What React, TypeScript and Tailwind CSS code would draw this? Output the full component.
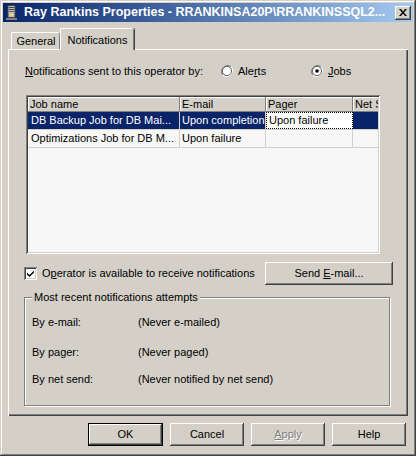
import React from 'react'

const raised =
  'shadow-[inset_-1px_-1px_#404040,inset_1px_1px_#ffffff,inset_-2px_-2px_#808080,inset_2px_2px_#d4d0c8]'
const sunken =
  'shadow-[inset_1px_1px_#808080,inset_-1px_-1px_#ffffff,inset_2px_2px_#404040,inset_-2px_-2px_#d4d0c8]'

function Radio({ checked }: { checked?: boolean }) {
  return (
    <svg width="12" height="12" viewBox="0 0 12 12">
      <path d="M10.2 1.8A6 6 0 0 0 1.8 10.2" fill="none" stroke="#808080" strokeWidth="1" />
      <path d="M1.8 10.2A6 6 0 0 0 10.2 1.8" fill="none" stroke="#ffffff" strokeWidth="1" />
      <circle cx="6" cy="6" r="4.6" fill="#ffffff" stroke="#404040" strokeWidth="0.8" />
      {checked && <circle cx="6" cy="6" r="1.8" fill="#000" />}
    </svg>
  )
}

function Btn({ children, w, isDefault, disabled }: { children: React.ReactNode; w: string; isDefault?: boolean; disabled?: boolean }) {
  return (
    <div className={`${w} h-[23px] ${isDefault ? 'border border-black' : ''}`}>
      <div
        className={`w-full h-full flex items-center justify-center bg-[#d4d0c8] ${raised} ${
          disabled ? 'text-[#808080] [text-shadow:1px_1px_#ffffff]' : 'text-black'
        }`}
      >
        {children}
      </div>
    </div>
  )
}

export default function App() {
  return (
    <div className="w-[416px] h-[456px] bg-[#d4d0c8] p-[3px] flex flex-col font-['Liberation_Sans',Arial,sans-serif] text-[11px] text-black shadow-[inset_-1px_-1px_#404040,inset_1px_1px_#d4d0c8,inset_-2px_-2px_#808080,inset_2px_2px_#ffffff]">
      {/* title bar */}
      <div className="h-[19px] flex items-center bg-gradient-to-r from-[#0a246a] to-[#a6caf0] pl-[2px] pr-[2px]">
        <svg width="14" height="16" viewBox="0 0 14 16" className="shrink-0">
          <rect x="3" y="0.5" width="7" height="12" fill="#c0c0c0" stroke="#404040" />
          <rect x="4" y="2" width="5" height="1" fill="#404040" />
          <rect x="4" y="4" width="5" height="1" fill="#404040" />
          <rect x="4" y="6" width="5" height="1" fill="#606060" />
          <rect x="5" y="9" width="3" height="2" fill="#e0e060" />
          <rect x="1" y="13" width="11" height="2" fill="#808080" />
        </svg>
        <div className="ml-[5px] text-white font-bold text-[12.5px] leading-none whitespace-nowrap">
          Ray Rankins Properties - RRANKINSA20P\RRANKINSSQL2...
        </div>
        <div className={`ml-auto w-[16px] h-[14px] bg-[#d4d0c8] flex items-center justify-center ${raised}`}>
          <svg width="8" height="7" viewBox="0 0 8 7">
            <path d="M0 0h2l2 2.5L6 0h2L5 3.5 8 7H6L4 4.5 2 7H0l3-3.5z" fill="#000" />
          </svg>
        </div>
      </div>

      <div className="px-[5px] pt-[6px] flex flex-col">
        {/* tabs */}
        <div className="flex items-end h-[21px] pl-[3px]">
          <div className="w-[49px] h-[17px] flex items-center justify-center rounded-t-[2px] border-t border-l border-white shadow-[inset_-1px_0_#808080,1px_0_#404040]">
            General
          </div>
          <div className="relative z-10 -mb-px w-[74px] h-[22px] bg-[#d4d0c8] flex items-start pt-[3px] justify-center rounded-t-[2px] border-t border-l border-white shadow-[inset_-1px_0_#808080,1px_0_#404040]">
            Notifications
          </div>
        </div>

        {/* panel */}
        <div className="h-[367px] flex flex-col pl-[16px] pt-[15px] shadow-[inset_1px_1px_#ffffff,inset_-1px_-1px_#404040,inset_-2px_-2px_#808080]">
          <div className="h-[14px] flex items-center">
            <div className="w-[197px] pl-[1px] whitespace-nowrap">
              <span className="underline">N</span>otifications sent to this operator by:
            </div>
            <div className="w-[90px] flex items-center gap-[5px]">
              <Radio />
              <span>
                Ale<span className="underline">r</span>ts
              </span>
            </div>
            <div className="flex items-center gap-[5px]">
              <Radio checked />
              <span>
                <span className="underline">J</span>obs
              </span>
            </div>
          </div>

          {/* list view */}
          <div className={`mt-[17px] ml-[2px] w-[354px] h-[159px] bg-[#f7f7f7] p-[2px] ${sunken}`}>
            <div className="w-full h-full overflow-hidden">
              <div className="flex h-[15px]">
                {[
                  ['Job name', 'w-[152px]'],
                  ['E-mail', 'w-[86px]'],
                  ['Pager', 'w-[87px]'],
                  ['Net Send', 'w-[40px]'],
                ].map(([t, w]) => (
                  <div
                    key={t}
                    className={`${w} shrink-0 h-full bg-[#d4d0c8] pl-[2px] flex items-center whitespace-nowrap overflow-hidden shadow-[inset_-1px_-1px_#808080,inset_1px_1px_#ffffff]`}
                  >
                    {t}
                  </div>
                ))}
              </div>
              <div className="flex h-[18px] text-white border-b border-[#d4d0c8]">
                <div className="w-[152px] shrink-0 bg-[#0a246a] pl-[3px] flex items-center border-r border-[#d4d0c8] whitespace-nowrap">
                  DB Backup Job for DB Mai...
                </div>
                <div className="w-[86px] shrink-0 bg-[#0a246a] pl-[2px] flex items-center border-r border-[#d4d0c8] whitespace-nowrap">
                  Upon completion
                </div>
                <div className="w-[87px] shrink-0 bg-white text-black pl-[2px] flex items-center border border-dotted border-black">
                  Upon failure
                </div>
                <div className="w-[40px] shrink-0 bg-[#0a246a]" />
              </div>
              <div className="flex h-[18px] border-b border-[#d4d0c8]">
                <div className="w-[152px] shrink-0 pl-[3px] flex items-center border-r border-[#d4d0c8] whitespace-nowrap">
                  Optimizations Job for DB M...
                </div>
                <div className="w-[86px] shrink-0 pl-[2px] flex items-center border-r border-[#d4d0c8]">
                  Upon failure
                </div>
                <div className="w-[87px] shrink-0 border-r border-[#d4d0c8]" />
                <div className="w-[40px] shrink-0" />
              </div>
            </div>
          </div>

          {/* checkbox row */}
          <div className="mt-[8px] h-[23px] flex items-center">
            <div className={`w-[13px] h-[13px] shrink-0 bg-white flex items-center justify-center ${sunken}`}>
              <svg width="7" height="7" viewBox="0 0 7 7">
                <path d="M0 2.5l2.5 2.5L7 0.5v2L2.5 7 0 4.5z" fill="#000" />
              </svg>
            </div>
            <div className="ml-[5px] w-[223px] whitespace-nowrap">
              O<span className="underline">p</span>erator is available to receive notifications
            </div>
            <Btn w="w-[128px]">
              <span>
                Send <span className="underline">E</span>-mail...
              </span>
            </Btn>
          </div>

          {/* group box */}
          <div className="relative mt-[12px] w-[366px] h-[109px] border border-[#808080] shadow-[inset_1px_1px_#ffffff,1px_1px_#ffffff]">
            <span className="absolute -top-[8px] left-[7px] bg-[#d4d0c8] px-[2px] leading-[14px] whitespace-nowrap">
              Most recent notifications attempts
            </span>
            <div className="pl-[7px] pt-[17px] flex flex-col">
              <div className="flex h-[14px] items-center">
                <div className="w-[106px]">By e-mail:</div>
                <div>(Never e-mailed)</div>
              </div>
              <div className="flex h-[14px] items-center mt-[16px]">
                <div className="w-[106px]">By pager:</div>
                <div>(Never paged)</div>
              </div>
              <div className="flex h-[14px] items-center mt-[13px]">
                <div className="w-[106px]">By net send:</div>
                <div>(Never notified by net send)</div>
              </div>
            </div>
          </div>
        </div>

        {/* dialog buttons */}
        <div className="mt-[7px] flex justify-end gap-[7px] pr-[2px]">
          <Btn w="w-[75px]" isDefault>
            OK
          </Btn>
          <Btn w="w-[74px]">Cancel</Btn>
          <Btn w="w-[74px]" disabled>
            <span>
              <span className="underline">A</span>pply
            </span>
          </Btn>
          <Btn w="w-[74px]">Help</Btn>
        </div>
      </div>
    </div>
  )
}
